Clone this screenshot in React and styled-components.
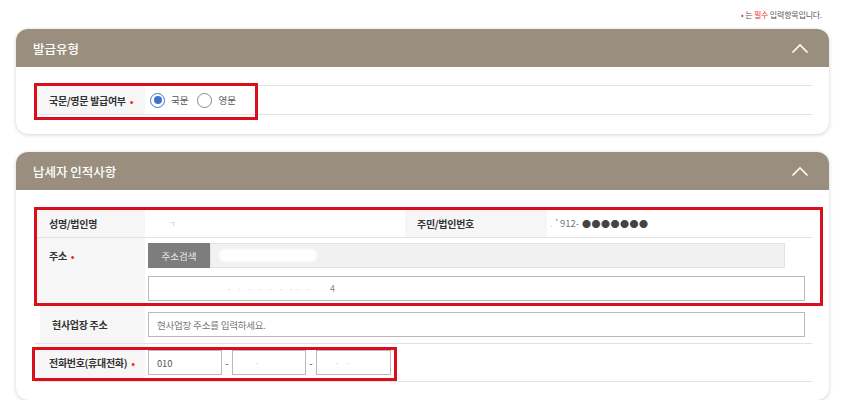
import React from 'react'
import styled, { createGlobalStyle } from 'styled-components'

const Global = createGlobalStyle`
  body {
    margin: 0;
    background: #fff;
    font-family: "Noto Sans CJK KR", "Noto Sans", sans-serif;
    color: #333;
  }
  * { box-sizing: border-box; }
`

const Page = styled.div`
  padding: 8px 13px 0 16px;
  display: flex;
  flex-direction: column;
`

const Note = styled.div`
  align-self: flex-end;
  margin-right: 7px;
  font-size: 8px;
  line-height: 14px;
  color: #555;
  letter-spacing: -0.2px;
  em { font-style: normal; color: #e33; }
`

const Card = styled.section`
  margin-top: ${p => p.$top}px;
  border-radius: 12px;
  background: #fff;
  box-shadow: 0 1px 4px rgba(0,0,0,0.16), 0 0 1px rgba(0,0,0,0.12);
  overflow: hidden;
`

const Header = styled.div`
  height: 38px;
  background: #9a8f7f;
  display: flex;
  align-items: center;
  justify-content: space-between;
  padding: 0 20px 0 17px;
  color: #fff;
  font-size: 12.5px;
  font-weight: 500;
`

const Body = styled.div`
  padding: ${p => p.$pad};
  position: relative;
`

const Table = styled.div`
  border-top: 1px solid #e3e3e3;
  position: relative;
`

const Row = styled.div`
  display: grid;
  grid-template-columns: ${p => p.$cols || '110px 1fr'};
  min-height: ${p => p.$h}px;
  border-bottom: 1px solid #e3e3e3;
`

const Label = styled.div`
  background: #f6f6f6;
  display: flex;
  align-items: ${p => p.$top ? 'flex-start' : 'center'};
  padding: ${p => p.$top ? '10px 0 0 12px' : '0 0 0 12px'};
  font-size: 10px;
  font-weight: 700;
  color: #333;
  letter-spacing: -0.3px;
  margin-left: ${p => p.$ml || 0}px;
  b { color: #e33; margin-left: 4px; font-weight: 700; }
`

const Cell = styled.div`
  display: flex;
  flex-direction: ${p => p.$col ? 'column' : 'row'};
  justify-content: ${p => p.$col ? 'center' : 'flex-start'};
  align-items: ${p => p.$col ? 'stretch' : 'center'};
  gap: ${p => p.$gap || 0}px;
  padding: ${p => p.$pad || '0 7px 0 3px'};
  font-size: 10px;
  color: #555;
`

const RadioWrap = styled.label`
  display: flex;
  align-items: center;
  gap: 6px;
  margin-right: 9px;
  font-size: 9.5px;
  color: #555;
`

const RadioDot = styled.span`
  width: 15px;
  height: 15px;
  border-radius: 50%;
  border: 1px solid ${p => p.$on ? '#3d74c9' : '#888'};
  background: #fff;
  display: flex;
  align-items: center;
  justify-content: center;
  &::after {
    content: '';
    width: 8px;
    height: 8px;
    border-radius: 50%;
    background: ${p => p.$on ? '#3d74c9' : 'transparent'};
  }
`

const Highlight = styled.div`
  position: absolute;
  left: ${p => p.$l}px;
  top: ${p => p.$t}px;
  width: ${p => p.$w}px;
  height: ${p => p.$h}px;
  border: 3px solid #d9101c;
  pointer-events: none;
`

const Button = styled.div`
  width: 62px;
  height: 25px;
  background: #7d7d7d;
  color: #e8e8e8;
  font-size: 9.5px;
  display: flex;
  align-items: center;
  justify-content: center;
  flex-shrink: 0;
`

const Line = styled.div`
  display: flex;
  align-items: center;
`

const Input = styled.div`
  height: 25px;
  flex: ${p => p.$w ? `0 0 ${p.$w}px` : '1'};
  border: 1px solid ${p => p.$gray ? '#e3e3e3' : '#b9b9b9'};
  background: ${p => p.$gray ? '#f1f1f1' : '#fff'};
  display: flex;
  align-items: center;
  padding-left: 8px;
  font-size: 9.5px;
  color: ${p => p.$ph ? '#777' : '#555'};
  letter-spacing: -0.2px;
`

const Blob = styled.span`
  display: inline-block;
  width: 98px;
  height: 13px;
  border-radius: 8px;
  background: #fff;
  filter: blur(1px);
`

const Faint = styled.span`
  color: #c9c9c9;
  font-size: 8px;
  letter-spacing: 2px;
  margin-left: ${p => p.$ml || 0}px;
`

const Dash = styled.span`
  width: 10px;
  text-align: center;
  color: #555;
  font-size: 10px;
`

const Masked = styled.span`
  color: #777;
  font-size: 9.5px;
`

const Dots = styled.span`
  color: #444;
  font-size: 9px;
  letter-spacing: 0.5px;
  margin-left: 3px;
`

const Digit = styled.span`
  color: #888;
  font-size: 9px;
  margin-left: 18px;
`

function Chevron() {
  return (
    <svg width="18" height="11" viewBox="0 0 18 11">
      <path d="M1.5 9.5 L9 2 L16.5 9.5" fill="none" stroke="#fff" strokeWidth="1.6" />
    </svg>
  )
}

function Radio({ on, children }) {
  return (
    <RadioWrap>
      <RadioDot $on={on} />
      {children}
    </RadioWrap>
  )
}

export default function App() {
  return (
    <Page>
      <Global />
      <Note><em>•</em> 는 <em>필수</em> 입력항목입니다.</Note>

      <Card $top={7}>
        <Header>발급유형<Chevron /></Header>
        <Body $pad="18px 17px 19px 19px">
          <Table>
            <Row $h={29}>
              <Label $ml={2}>국문/영문 발급여부<b>•</b></Label>
              <Cell $pad="0 0 0 5px">
                <Radio on>국문</Radio>
                <Radio>영문</Radio>
              </Cell>
            </Row>
            <Highlight $l={-1} $t={-3} $w={224} $h={37} />
          </Table>
        </Body>
      </Card>

      <Card $top={18}>
        <Header>납세자 인적사항<Chevron /></Header>
        <Body $pad="18px 17px 18px 19px">
          <Table>
            <Row $h={29} $cols="110px 260px 142px 1fr">
              <Label $ml={2}>성명/법인명</Label>
              <Cell><Faint $ml={20}>ㄱ</Faint></Cell>
              <Label>주민/법인번호</Label>
              <Cell>
                <Faint>.</Faint><Masked>`912-</Masked><Dots>●●●●●●●</Dots>
              </Cell>
            </Row>
            <Row $h={68}>
              <Label $ml={2} $top>주소<b>•</b></Label>
              <Cell $col $gap={8} $pad="5px 7px 4px 3px">
                <Line>
                  <Button>주소검색</Button>
                  <Input $gray style={{ marginRight: 20 }}><Blob /></Input>
                </Line>
                <Line>
                  <Input><Faint $ml={70}>· · ·  · · · ·· · </Faint><Digit>4</Digit></Input>
                </Line>
              </Cell>
            </Row>
            <Row $h={38}>
              <Label $ml={5}>현사업장 주소</Label>
              <Cell>
                <Input $ph>현사업장 주소를 입력하세요.</Input>
              </Cell>
            </Row>
            <Row $h={38}>
              <Label $ml={2}>전화번호(휴대전화)<b>•</b></Label>
              <Cell>
                <Input $w={74}>010</Input>
                <Dash>-</Dash>
                <Input $w={74}><Faint $ml={14}>·</Faint></Input>
                <Dash>-</Dash>
                <Input $w={75}><Faint $ml={10}>· ·</Faint></Input>
              </Cell>
            </Row>
            <Highlight $l={-1} $t={-2} $w={789} $h={99} />
            <Highlight $l={-3} $t={138} $w={365} $h={34} />
          </Table>
        </Body>
      </Card>
    </Page>
  )
}
